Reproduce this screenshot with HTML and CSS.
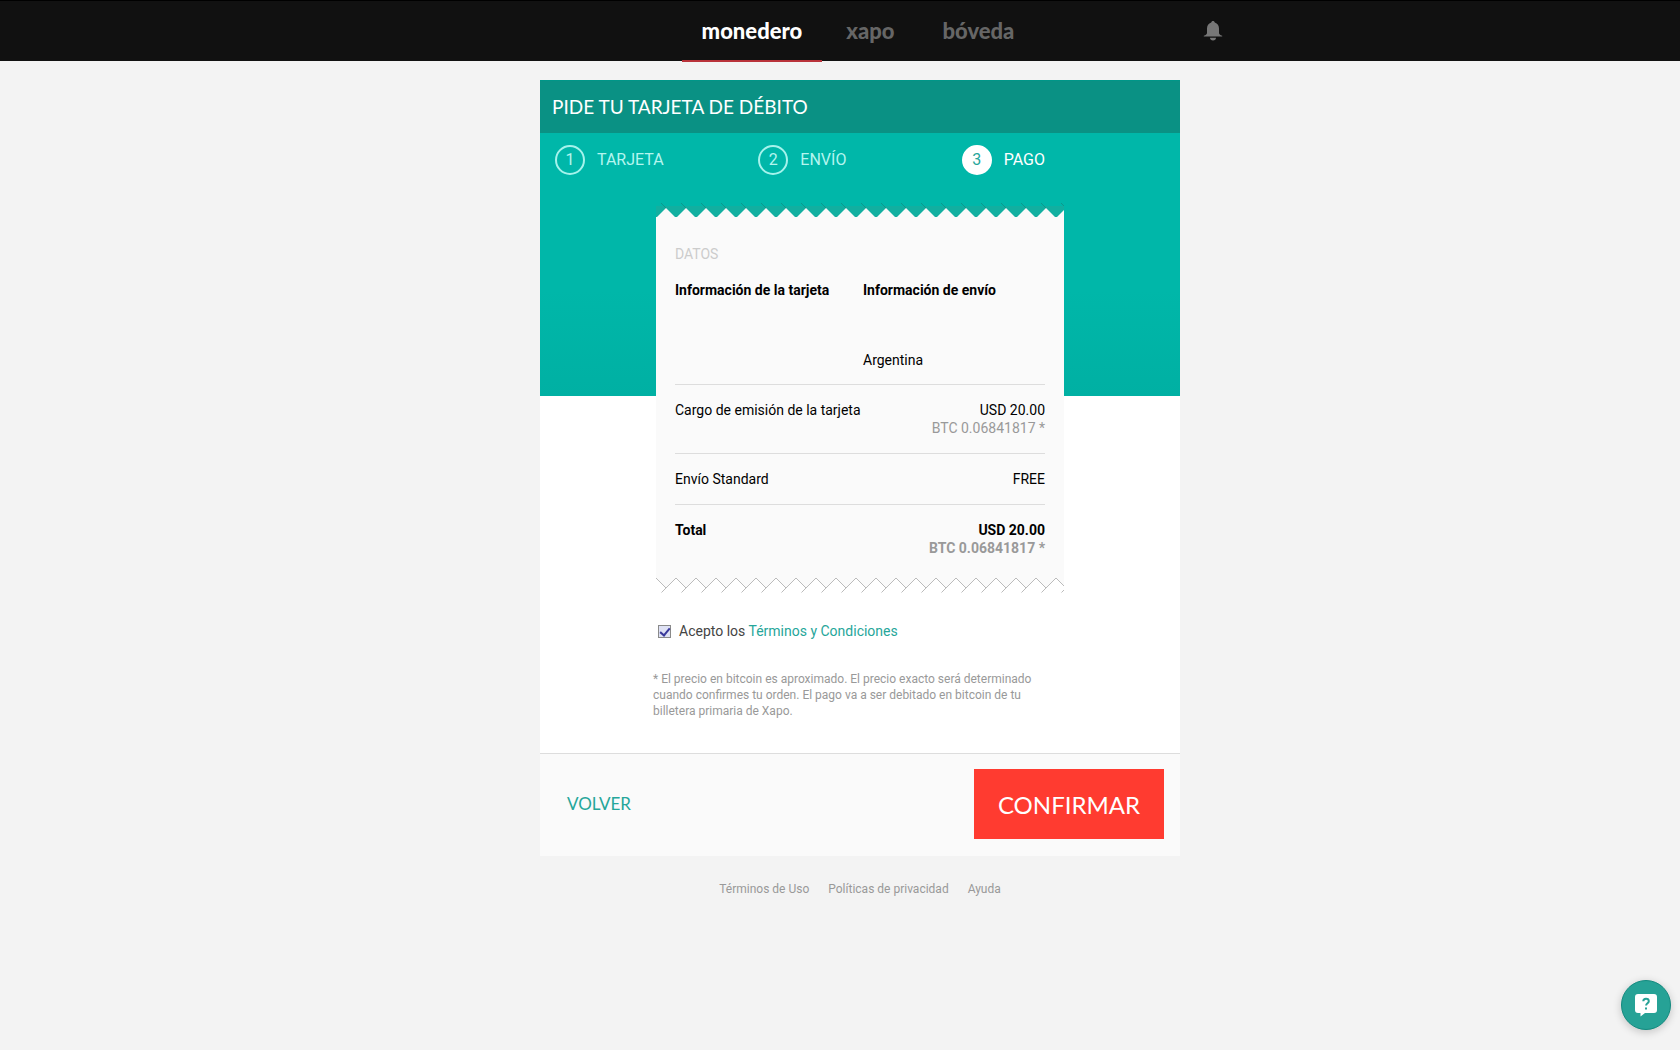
FILE: index.html
```html
<!DOCTYPE html>
<html lang="es">
<head>
    <meta charset="UTF-8">
    <meta name="viewport" content="width=device-width, initial-scale=1.0">
    <title>Pide tu tarjeta de débito</title>
    <link rel="stylesheet" href="styles.css">
</head>
<body>

    <header class="topbar">
        <nav class="topbar-inner">
            <a href="#" class="tab active">monedero</a>
            <a href="#" class="tab">xapo</a>
            <a href="#" class="tab">bóveda</a>
            <button class="bell" aria-label="Notificaciones">
                <svg width="20" height="20" viewBox="0 0 20 20">
                    <path d="M10 0c1 0 1.600.600 1.800 1.500C14.600 2.400 16 4.600 16 7.500V12c0 1.300 1 2 3.200 2.800V15.600H.8V14.800C3 14 4 13.300 4 12V7.500C4 4.600 5.400 2.400 8.200 1.500 8.400.6 9 0 10 0z"/>
                    <path d="M7 16.800h6c0 1.800-1.300 2.700-3 2.700s-3-.9-3-2.700z"/>
                </svg>
            </button>
        </nav>
    </header>

    <main class="card">
        <h1>PIDE TU TARJETA DE DÉBITO</h1>

        <div class="card-body">
            <ol class="steps">
                <li class="step"><span class="num">1</span>TARJETA</li>
                <li class="step"><span class="num">2</span>ENVÍO</li>
                <li class="step active"><span class="num">3</span>PAGO</li>
            </ol>

            <div class="order">
                <section class="receipt">
                    <svg class="edge" width="100%" height="18" aria-hidden="true">
                        <defs>
                            <pattern id="topEdge" width="20" height="18" patternUnits="userSpaceOnUse">
                                <path class="tear-shade" d="M0 7H20V18H0z"/>
                                <path class="paper" d="M0 19L10 9 20 19z"/>
                                <path class="tear-dark" d="M5 4l5 5"/>
                            </pattern>
                        </defs>
                        <rect width="100%" height="18" fill="url(#topEdge)"/>
                    </svg>

                    <div class="receipt-body">
                        <h2>DATOS</h2>
                        <div class="info">
                            <div>
                                <h3>Información de la tarjeta</h3>
                            </div>
                            <div>
                                <h3>Información de envío</h3>
                                <p>Argentina</p>
                            </div>
                        </div>

                        <div class="row">
                            <span>Cargo de emisión de la tarjeta</span>
                            <span class="amount">USD 20.00<small>BTC 0.06841817 *</small></span>
                        </div>
                        <div class="row">
                            <span>Envío Standard</span>
                            <span class="amount">FREE</span>
                        </div>
                        <div class="row total">
                            <span>Total</span>
                            <span class="amount">USD 20.00<small>BTC 0.06841817 *</small></span>
                        </div>
                    </div>

                    <svg class="edge" width="100%" height="16" aria-hidden="true">
                        <defs>
                            <pattern id="bottomEdge" width="20" height="16" patternUnits="userSpaceOnUse">
                                <path class="paper" d="M0 0H20V1L10 11 0 1z"/>
                                <path class="tear-line" d="M0 1L10 11M20 1L5.500 15.500"/>
                            </pattern>
                        </defs>
                        <rect width="100%" height="16" fill="url(#bottomEdge)"/>
                    </svg>
                </section>

                <div class="accept">
                    <input type="checkbox" id="terms" checked>
                    <label for="terms">Acepto los <a href="#">Términos y Condiciones</a></label>
                </div>

                <p class="note">* El precio en bitcoin es aproximado. El precio exacto será determinado cuando confirmes tu orden. El pago va a ser debitado en bitcoin de tu billetera primaria de Xapo.</p>
            </div>
        </div>

        <div class="actions">
            <a href="#" class="back">VOLVER</a>
            <button class="confirm">CONFIRMAR</button>
        </div>
    </main>

    <footer class="links">
        <a href="#">Términos de Uso</a>
        <a href="#">Políticas de privacidad</a>
        <a href="#">Ayuda</a>
    </footer>

    <button class="help" aria-label="Ayuda">
        <svg width="24" height="24" viewBox="0 0 24 24">
            <path class="bubble" d="M4 1H20Q23 1 23 4V17Q23 20 20 20H11L6.500 23.500V20H4Q1 20 1 17V4Q1 1 4 1z"/>
            <path class="mark" d="M9.300 8.300C9.300 6.600 10.400 5.800 12 5.800s2.800.9 2.800 2.400c0 2.100-2.700 2.100-2.700 4.400M12 14.400v2"/>
        </svg>
    </button>

</body>
</html>
```
FILE: styles.css
```css
* {
    box-sizing: border-box;
}
/* everything is centered right of a 40px gutter */
body {
    margin: 0;
    padding-left: 40px;
    font-family: Roboto, "Liberation Sans", sans-serif;
    font-size: 14px;
    line-height: 18px;
    color: #000;
    background-color: #f3f3f3;
}
h1, h2, h3, p, ol {
    margin: 0;
    padding: 0;
    font-weight: normal;
}
a {
    color: #26a69a;
    text-decoration: none;
}
button {
    border: none;
    padding: 0;
    cursor: pointer;
}

/* top bar */
.topbar {
    height: 61px;
    margin-left: -40px;
    padding-left: 40px;
    background-color: #111;
    border-top: 1px solid #000;
}
.topbar-inner {
    position: relative;
    display: flex;
    justify-content: center;
    max-width: 760px;
    margin: 0 auto;
}
.tab {
    height: 61px;
    padding: 0 24px;
    font-family: Lato, sans-serif;
    font-size: 22px;
    font-weight: 900;
    line-height: 59px;
    color: #666;
}
.tab.active {
    padding: 0 20px;
    color: #fff;
    border-bottom: 2px solid #b9323a;
}
.bell {
    position: absolute;
    top: 20px;
    right: 17px;
    height: 20px;
    background: none;
}
.bell svg {
    display: block;
    fill: #777;
}

/* card */
.card {
    max-width: 640px;
    margin: 19px auto 0;
    background-color: #fff;
}
h1 {
    padding: 0 12px;
    font-family: Lato, sans-serif;
    font-size: 19px;
    line-height: 52px;
    color: #fff;
    background-color: #0a9184;
    border-top: 1px solid #009688;
}
.card-body {
    padding: 12px 15px 34px;
    background: linear-gradient(#00b7a9 60%, #00b0a3) no-repeat;
    background-size: 100% 263px;
}
.steps {
    display: grid;
    grid-template-columns: repeat(3, 1fr);
    list-style: none;
}
.step {
    display: flex;
    align-items: center;
    gap: 12px;
    font-size: 16px;
    color: #b4f5ef;
}
.num {
    width: 30px;
    height: 30px;
    border: 2px solid #a5f3ec;
    border-radius: 50%;
    line-height: 26px;
    text-align: center;
}
.step.active {
    color: #fff;
}
.step.active .num {
    color: #26a69a;
    background-color: #fff;
    border-color: #fff;
}

/* receipt */
.order {
    max-width: 408px;
    margin: 24px auto 0;
}
.edge {
    display: block;
}
.paper {
    fill: #fafafa;
}
.tear-shade {
    fill: #12afa0;
}
.tear-dark {
    fill: none;
    stroke: #0d988c;
}
.tear-line {
    fill: none;
    stroke: #bbb;
}
.receipt-body {
    padding: 28px 19px 20px;
    background-color: #fafafa;
}
h2 {
    font-size: 14px;
    line-height: 18px;
    color: #ccc;
}
h3 {
    font-size: 14px;
    font-weight: bold;
    line-height: 18px;
}
.info {
    display: grid;
    grid-template-columns: 188px 1fr;
    padding: 18px 0 15px;
}
.info p {
    margin-top: 52px;
}
.row {
    display: flex;
    justify-content: space-between;
    padding: 16px 0;
    border-top: 1px solid #ddd;
}
.amount {
    text-align: right;
}
.amount small {
    display: block;
    font-size: 14px;
    color: #999;
}
.total {
    font-weight: bold;
    padding-bottom: 0;
}

.accept {
    display: flex;
    align-items: center;
    gap: 8px;
    margin-top: 29px;
    padding-left: 2px;
    color: #444;
}
.accept input {
    appearance: none;
    width: 13px;
    height: 13px;
    margin: 0;
    border: 1px solid #8a8a8a;
    background: #dfe2f5;
    display: grid;
    place-items: center;
}
.accept input::after {
    content: "";
    width: 4px;
    height: 8px;
    border: solid #39399b;
    border-width: 0 2px 2px 0;
    transform: rotate(40deg);
}
.accept input:not(:checked)::after {
    display: none;
}
.note {
    margin: 31px 0 0 -3px;
    padding-right: 14px;
    font-size: 12px;
    line-height: 16px;
    color: #999;
}

/* bottom of the card */
.actions {
    display: flex;
    justify-content: space-between;
    align-items: center;
    padding: 15px 16px 17px 27px;
    background-color: #fafafa;
    border-top: 1px solid #ddd;
}
.back, .confirm {
    font-family: Lato, sans-serif;
}
.back {
    font-size: 17px;
}
.confirm {
    width: 190px;
    height: 70px;
    font-size: 24px;
    color: #fff;
    background-color: #ff3b30;
}

.links {
    display: flex;
    justify-content: center;
    gap: 19px;
    padding: 24px 0;
    font-size: 12px;
}
.links a {
    color: #999;
}

/* floating help button */
.help {
    position: fixed;
    right: 9px;
    bottom: 20px;
    width: 50px;
    height: 50px;
    border: 1px solid #12897e;
    border-radius: 50%;
    background-color: #26a296;
    box-shadow: 0 2px 8px rgba(0, 0, 0, 0.2);
    display: grid;
    place-items: center;
}
.bubble {
    fill: #fff;
}
.mark {
    fill: none;
    stroke: #26a296;
    stroke-width: 2;
}
```
